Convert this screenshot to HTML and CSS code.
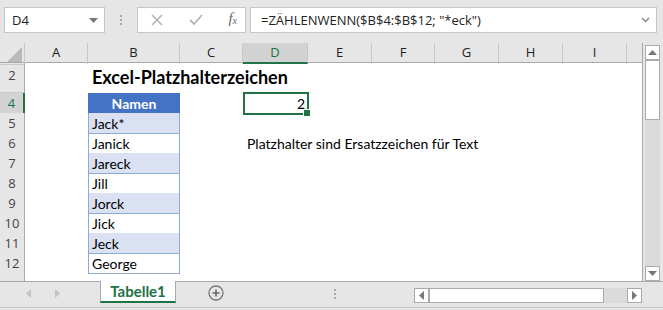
FILE: index.html
```html
<!DOCTYPE html>
<html lang="de">
<head>
    <meta charset="UTF-8">
    <title>Excel-Platzhalterzeichen</title>
    <link rel="stylesheet" href="styles.css">
</head>
<body>
<div class="window">
    <!-- formula bar -->
    <div class="toolbar">
        <div class="name-box">
            <span>D4</span>
            <svg class="caret" width="9" height="5" viewBox="0 0 9 5"><path d="M0 0h9L4.5 5z" fill="#777"/></svg>
        </div>
        <div class="grip"><i></i><i></i><i></i></div>
        <div class="fx-buttons">
            <svg width="14" height="14" viewBox="0 0 14 14"><path d="M2 2l10 10M12 2L2 12" stroke="#b4b4b4" stroke-width="1.6" fill="none"/></svg>
            <svg width="16" height="14" viewBox="0 0 16 14"><path d="M2 7l4 4 8-9" stroke="#b4b4b4" stroke-width="1.8" fill="none"/></svg>
            <span class="fx">f<sub>x</sub></span>
        </div>
        <div class="formula">
            <span>=ZÄHLENWENN($B$4:$B$12; "*eck")</span>
            <svg width="9" height="6" viewBox="0 0 9 6"><path d="M1 1l3.5 3.5L8 1" stroke="#888" stroke-width="1.5" fill="none"/></svg>
        </div>
    </div>

    <div class="sheet">
        <div class="grid">
            <div class="row col-head">
                <div class="corner"><svg width="15" height="15" viewBox="0 0 15 15"><path d="M15 0V15H0z" fill="#b9b9b9"/></svg></div>
                <div class="ch">A</div>
                <div class="ch">B</div>
                <div class="ch">C</div>
                <div class="ch active">D</div>
                <div class="ch">E</div>
                <div class="ch">F</div>
                <div class="ch">G</div>
                <div class="ch">H</div>
                <div class="ch">I</div>
                <div class="ch last"></div>
            </div>
            <div class="row r-tiny"><div class="rh"></div></div>
            <div class="row r-title">
                <div class="rh">2</div><div class="c"></div>
                <div class="c title">Excel-Platzhalterzeichen</div>
            </div>
            <div class="row r-gap"><div class="rh"></div></div>
            <div class="row">
                <div class="rh active">4</div><div class="c"></div>
                <div class="c tb tb-head">Namen</div><div class="c"></div>
                <div class="c num selected">2</div>
            </div>
            <div class="row">
                <div class="rh">5</div><div class="c"></div>
                <div class="c tb band">Jack*</div>
            </div>
            <div class="row">
                <div class="rh">6</div><div class="c"></div>
                <div class="c tb">Janick</div><div class="c"></div>
                <div class="c note">Platzhalter sind Ersatzzeichen für Text</div>
            </div>
            <div class="row">
                <div class="rh">7</div><div class="c"></div>
                <div class="c tb band">Jareck</div>
            </div>
            <div class="row">
                <div class="rh">8</div><div class="c"></div>
                <div class="c tb">Jill</div>
            </div>
            <div class="row">
                <div class="rh">9</div><div class="c"></div>
                <div class="c tb band">Jorck</div>
            </div>
            <div class="row">
                <div class="rh">10</div><div class="c"></div>
                <div class="c tb">Jick</div>
            </div>
            <div class="row">
                <div class="rh">11</div><div class="c"></div>
                <div class="c tb band">Jeck</div>
            </div>
            <div class="row">
                <div class="rh">12</div><div class="c"></div>
                <div class="c tb">George</div>
            </div>
            <div class="row r-cut"><div class="rh"></div></div>
        </div>
        <div class="vscroll">
            <div class="sb-btn"><svg width="9" height="5" viewBox="0 0 9 5"><path d="M0 5h9L4.5 0z" fill="#777"/></svg></div>
            <div class="sb-thumb"></div>
            <div class="sb-track"></div>
            <div class="sb-btn"><svg width="9" height="5" viewBox="0 0 9 5"><path d="M0 0h9L4.5 5z" fill="#777"/></svg></div>
        </div>
    </div>

    <div class="tabbar">
        <div class="tab-nav">
            <svg width="5" height="9" viewBox="0 0 5 9"><path d="M5 0v9L0 4.5z" fill="#c4c4c4"/></svg>
            <svg width="5" height="9" viewBox="0 0 5 9"><path d="M0 0v9l5-4.5z" fill="#c4c4c4"/></svg>
        </div>
        <div class="tab">Tabelle1</div>
        <div class="add-sheet">
            <svg width="16" height="16" viewBox="0 0 16 16"><circle cx="8" cy="8" r="7" stroke="#777" stroke-width="1.3" fill="none"/><path d="M8 4.5v7M4.5 8h7" stroke="#666" stroke-width="1.6"/></svg>
        </div>
        <div class="tab-grip"><i></i><i></i><i></i></div>
        <div class="hscroll">
            <div class="sb-btn"><svg width="5" height="9" viewBox="0 0 5 9"><path d="M5 0v9L0 4.5z" fill="#777"/></svg></div>
            <div class="sb-thumb"></div>
            <div class="sb-track"></div>
            <div class="sb-btn"><svg width="5" height="9" viewBox="0 0 5 9"><path d="M0 0v9l5-4.5z" fill="#777"/></svg></div>
        </div>
    </div>
</div>
</body>
</html>
```

FILE: styles.css
```css
* {
    box-sizing: border-box;
}

body {
    margin: 0;
    background-color: #e6e6e6;
    font-family: "Open Sans", "Noto Sans", sans-serif;
}

.window {
    width: 663px;
    height: 310px;
    overflow: hidden;
    display: flex;
    flex-direction: column;
}

/* formula bar */
.toolbar {
    height: 43px;
    padding: 7px 6px 0 4px;
    display: flex;
    align-items: flex-start;
}

.name-box,
.fx-buttons,
.formula {
    height: 26px;
    background-color: #fff;
    border: 1px solid #c6c6c6;
    display: flex;
    align-items: center;
}

.name-box {
    width: 101px;
    padding: 0 6px 0 7px;
    justify-content: space-between;
    font-size: 13px;
    color: #222;
}

.grip {
    width: 32px;
    height: 26px;
    display: flex;
    flex-direction: column;
    align-items: center;
    justify-content: center;
    gap: 2px;
}

.grip i,
.tab-grip i {
    display: block;
    width: 2px;
    height: 2px;
    background-color: #aaa;
}

.fx-buttons {
    width: 109px;
    padding: 0 8px 0 12px;
    justify-content: space-between;
}

.fx {
    font-family: "Liberation Serif", serif;
    font-style: italic;
    font-size: 15px;
    color: #666;
    padding-bottom: 3px;
}

.fx sub {
    font-size: 10px;
    vertical-align: -1px;
}

.formula {
    flex: 1;
    margin-left: 4px;
    padding: 0 6px 0 10px;
    justify-content: space-between;
    font-size: 13px;
    color: #222;
}

/* sheet */
.sheet {
    height: 238px;
    display: flex;
}

.grid {
    width: 643px;
    background-color: #fff;
    border-right: 1px solid #a9a9a9;
    overflow: hidden;
}

.row {
    display: grid;
    grid-template-columns: 25px 63px 92px 63px 65px 64px 63px 64px 64px 64px 1fr;
    height: 20px;
}

.col-head {
    background-color: #e6e6e6;
    border-bottom: 1px solid #a9a9a9;
}

.corner {
    border-right: 1px solid #c8c8c8;
    display: flex;
    align-items: flex-end;
    justify-content: flex-end;
    padding: 0 2px 2px 0;
}

.ch {
    border-right: 1px solid #c8c8c8;
    text-align: center;
    font-size: 13px;
    line-height: 19px;
    color: #222;
}

.ch.active {
    background-color: #d3d3d3;
    border-bottom: 2px solid #217346;
    color: #217346;
}

.ch.last {
    border-right: none;
}

.rh {
    background-color: #e6e6e6;
    border-right: 1px solid #a9a9a9;
    border-bottom: 1px solid #c8c8c8;
    text-align: center;
    font-size: 13px;
    line-height: 20px;
    color: #444;
    overflow: hidden;
}

.rh.active {
    background-color: #d3d3d3;
    border-right: 2px solid #217346;
    color: #217346;
}

.r-tiny {
    height: 2px;
}

.r-title {
    height: 23px;
}

.r-gap {
    height: 5px;
}

.r-cut {
    height: 8px;
}

.r-cut .rh {
    border-bottom: none;
}

.c {
    font-family: Lato, "Open Sans", sans-serif;
    font-size: 14px;
    line-height: 19px;
    padding: 1px 3px 0;
    color: #000;
    white-space: nowrap;
}

.title {
    font-weight: bold;
    font-size: 18px;
    line-height: 24px;
    padding: 0 4px;
}

.tb {
    border: 1px solid #8ea9db;
    border-top: none;
}

.band {
    background-color: #d9e1f2;
}

.tb-head {
    background-color: #4472c4;
    border-color: #4472c4;
    color: #fff;
    font-weight: bold;
    text-align: center;
}

.num {
    text-align: right;
}

.note {
    padding-left: 4px;
}

.selected {
    position: relative;
}

.selected::after {
    content: "";
    position: absolute;
    top: -1px;
    left: 0;
    right: -1px;
    bottom: -1px;
    border: 2px solid #217346;
}

.selected::before {
    content: "";
    position: absolute;
    right: -3px;
    bottom: -3px;
    width: 6px;
    height: 6px;
    background-color: #217346;
    border: 1px solid #fff;
    z-index: 1;
}

/* scrollbars */
.vscroll {
    width: 15px;
    margin: 2px 0 0 2px;
    display: flex;
    flex-direction: column;
    background-color: #dbdbdb;
}

.sb-btn {
    background-color: #fff;
    border: 1px solid #ababab;
    display: flex;
    align-items: center;
    justify-content: center;
}

.vscroll .sb-btn {
    height: 15px;
}

.sb-thumb {
    background-color: #fff;
    border: 1px solid #ababab;
}

.vscroll .sb-thumb {
    height: 60px;
}

.sb-track {
    flex: 1;
}

.tabbar {
    flex: 1;
    display: flex;
    align-items: flex-start;
    border-top: 1px solid #a9a9a9;
    border-bottom: 1px solid #c6c6c6;
    margin-bottom: 2px;
}

.tab-nav {
    width: 100px;
    height: 22px;
    display: flex;
    align-items: center;
    gap: 24px;
    padding-left: 26px;
}

.tab {
    width: 76px;
    height: 22px;
    margin-top: -1px;
    background-color: #fff;
    border: 1px solid #a9a9a9;
    border-top: none;
    border-bottom: 2px solid #217346;
    text-align: center;
    font-family: Lato, sans-serif;
    font-weight: bold;
    font-size: 15px;
    line-height: 21px;
    color: #217346;
}

.add-sheet {
    width: 80px;
    height: 22px;
    display: flex;
    align-items: center;
    padding-left: 32px;
}

.tab-grip {
    width: 158px;
    height: 24px;
    display: flex;
    flex-direction: column;
    align-items: center;
    justify-content: center;
    gap: 2px;
}

.hscroll {
    width: 228px;
    height: 15px;
    margin-top: 6px;
    display: flex;
    background-color: #dbdbdb;
}

.hscroll .sb-btn {
    width: 15px;
}

.hscroll .sb-thumb {
    width: 175px;
}
```
